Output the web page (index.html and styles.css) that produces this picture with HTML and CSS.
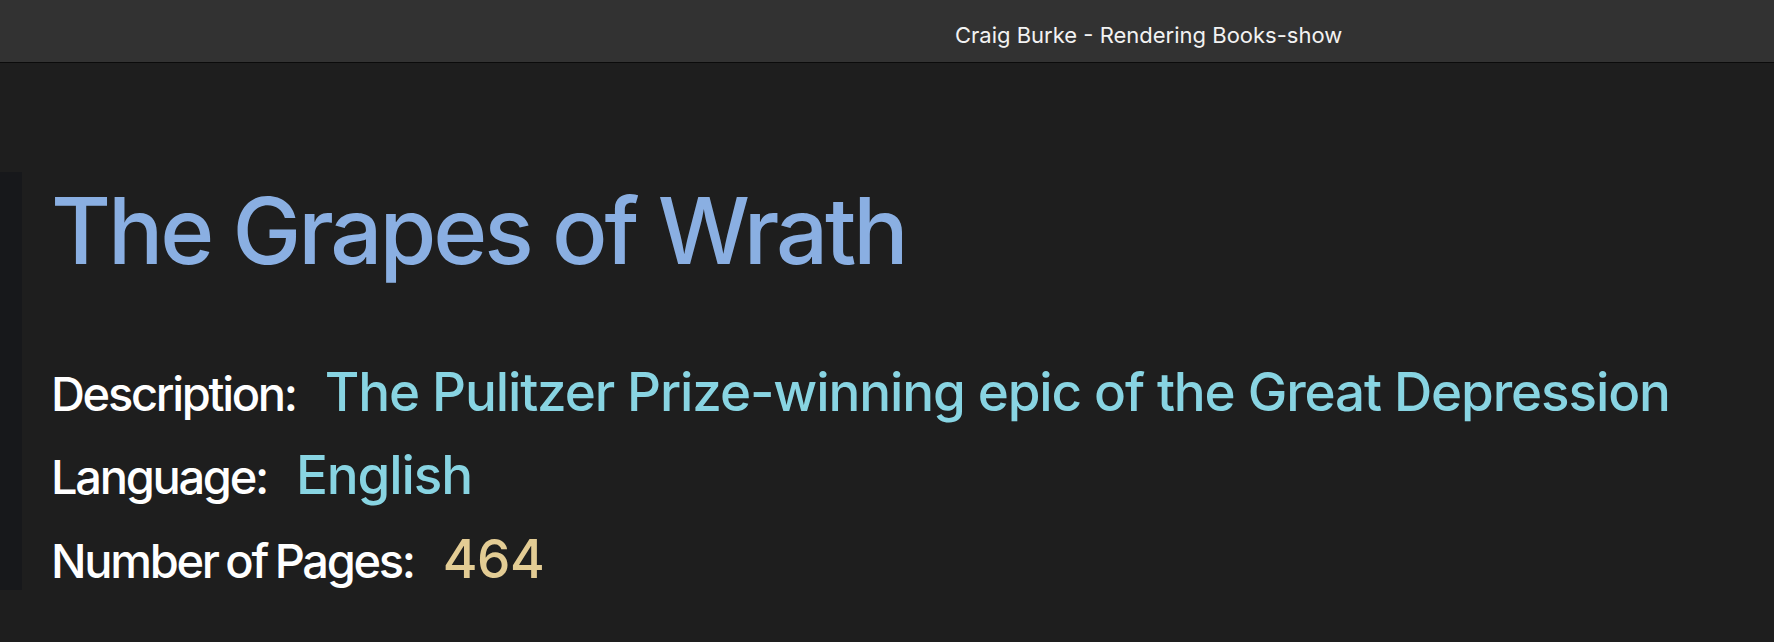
FILE: index.html
```html
<!DOCTYPE html>
<html lang="en">
<head>
<meta charset="utf-8">
<title>Craig Burke - Rendering Books-show</title>
<link rel="stylesheet" href="styles.css">
</head>
<body>
  <header class="titlebar">
    <span class="window-title">Craig Burke - Rendering Books-show</span>
  </header>
  <main class="content">
    <section class="book">
      <h1 class="book-title">The Grapes of Wrath</h1>
      <div class="field">
        <span class="label">Description:</span>
        <span class="value text">The Pulitzer Prize-winning epic of the Great Depression</span>
      </div>
      <div class="field">
        <span class="label">Language:</span>
        <span class="value text">English</span>
      </div>
      <div class="field">
        <span class="label">Number of Pages:</span>
        <span class="value number">464</span>
      </div>
    </section>
  </main>
</body>
</html>
```
FILE: styles.css
```css
html, body {
  margin: 0;
  padding: 0;
}
body {
  background: #1e1e1e;
  font-family: Inter, "Noto Sans", "Liberation Sans", sans-serif;
  color: #ffffff;
  height: 642px;
  overflow: hidden;
}
.titlebar {
  height: 62px;
  background: #323232;
  border-bottom: 1px solid #0b0b0b;
  display: flex;
  align-items: center;
  padding-left: 955px;
  box-sizing: content-box;
}
.window-title {
  font-size: 22px;
  color: #f2f2f2;
  padding-top: 8px;
}
.content {
  padding-top: 109px;
}
.book {
  border-left: 22px solid #17181b;
  padding-left: 29px;
  padding-top: 12.5px;
}
.book-title {
  margin: 0;
  font-size: 92px;
  line-height: 92px;
  font-weight: 500;
  letter-spacing: -3.1px;
  color: #8aafe2;
}
.field {
  display: flex;
  align-items: baseline;
  gap: 29px;
  font-size: 53px;
  line-height: 61px;
  margin-top: 22.5px;
}
.book-title + .field {
  margin-top: 85.4px;
}
.label {
  font-size: 47px;
  line-height: 1;
  font-weight: 500;
  letter-spacing: -2.3px;
  word-spacing: -2.5px;
  color: #ffffff;
}
.value {
  font-weight: 500;
}
.value.text {
  color: #88d4e2;
  letter-spacing: -1.12px;
}
.value.number {
  color: #e3cc94;
  letter-spacing: -0.5px;
}
```
